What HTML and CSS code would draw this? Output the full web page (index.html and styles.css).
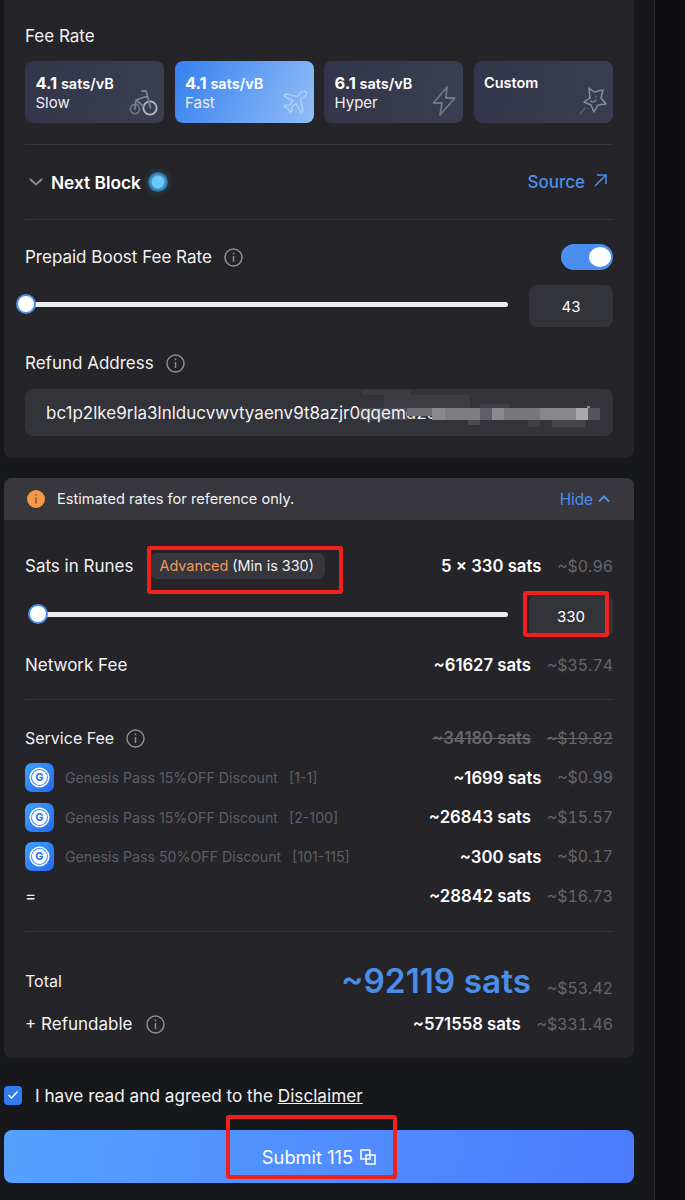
FILE: index.html
```html
<!DOCTYPE html>
<html lang="en">
<head>
    <meta charset="UTF-8">
    <meta name="viewport" content="width=device-width, initial-scale=1.0">
    <title>Inscribe Runes</title>
    <link rel="stylesheet" href="styles.css">
</head>
<body>
    <main class="column">
        <!-- Fee settings -->
        <section class="panel panel-top">
            <div class="label fee-title">Fee Rate</div>
            <div class="fee-cards">
                <div class="fee-card">
                    <div class="fee-text"><div class="fee-rate"><b>4.1</b> sats/vB</div><div class="fee-name">Slow</div></div>
                    <svg class="fee-icon" width="29" height="27" viewBox="0 0 29 27" fill="none" stroke-width="1.8" stroke-linecap="round" stroke-linejoin="round">
                        <circle cx="6" cy="20" r="4.6" stroke="#6f7280"/>
                        <circle cx="21" cy="19" r="6.6" stroke="#b5b7c0"/>
                        <path d="M13 2h4l1.500 5 3 12M18.500 7L7 11l-1 9M7 11l7 6" stroke="#7d808c"/>
                    </svg>
                </div>
                <div class="fee-card fee-card-active">
                    <div class="fee-text"><div class="fee-rate"><b>4.1</b> sats/vB</div><div class="fee-name">Fast</div></div>
                    <svg class="fee-icon" width="26" height="26" viewBox="0 0 26 26" fill="none" stroke="#d5e6fd" stroke-opacity="0.55" stroke-width="1.5" stroke-linejoin="round">
                        <path d="M24 2c-1.500-1.500-4-.5-5.500 1L15 6.500 4 4 2 6l9 5-4 4.500-3.500-.5L2 16.500l4 2 2.500 4 1.500-1.500-.5-3.500 4.500-4 5 9 2-2-2.500-11L22 7c1.500-1.500 3-3.500 2-5z"/>
                    </svg>
                </div>
                <div class="fee-card">
                    <div class="fee-text"><div class="fee-rate"><b>6.1</b> sats/vB</div><div class="fee-name">Hyper</div></div>
                    <svg class="fee-icon" width="25" height="30" viewBox="0 0 25 30" fill="none" stroke="#73767f" stroke-width="1.800" stroke-linejoin="round">
                        <path d="M15 1L1.500 17H10l-2 12 15-17h-9z"/>
                    </svg>
                </div>
                <div class="fee-card">
                    <div class="fee-text"><div class="fee-rate">Custom</div></div>
                    <svg class="fee-icon" width="29" height="30" viewBox="0 0 29 30" fill="none" stroke="#8a8c96" stroke-width="1.500" stroke-linejoin="round" stroke-linecap="round">
                        <path d="M11 2l5 4 9-2-2 8 5 6-8 1-4 7-3-7-7-3 6-4z"/>
                        <path d="M12 11v1M18 10v1M12.500 15c2 1.500 4 1 5.500-1" stroke-width="1.200"/>
                        <path d="M7 22l-5 6" stroke="#5d5f69"/>
                    </svg>
                </div>
            </div>
            <hr class="divider divider-fee">
            <div class="block-row">
                <svg class="chevron" width="14" height="8" viewBox="0 0 14 8" fill="none" stroke="#8b8c92" stroke-width="2"><path d="M1 1l6 5.500L13 1"/></svg>
                <span class="block-name">Next Block</span>
                <span class="pulse"></span>
                <span class="source">Source</span>
                <svg class="source-arrow" width="13" height="13" viewBox="0 0 13 13" fill="none" stroke="#4a8fe7" stroke-width="1.500"><path d="M1 12L12 1M3 1h9v9"/></svg>
            </div>
            <hr class="divider">
            <div class="boost-row">
                <span class="label">Prepaid Boost Fee Rate</span>
                <svg class="info" width="19" height="19" viewBox="0 0 19 19" fill="none" stroke="#8d8d92" stroke-width="1.500"><circle cx="9.500" cy="9.500" r="8.500"/><path d="M9.500 8v6M9.500 4.500v1.800"/></svg>
                <span class="toggle"><span class="toggle-knob"></span></span>
            </div>
            <div class="slider-row slider-boost">
                <div class="slider"><span class="thumb"></span></div>
                <div class="num-box">43</div>
            </div>
            <div class="refund-title">
                <span class="label">Refund Address</span>
                <svg class="info" width="19" height="19" viewBox="0 0 19 19" fill="none" stroke="#8d8d92" stroke-width="1.500"><circle cx="9.500" cy="9.500" r="8.500"/><path d="M9.500 8v6M9.500 4.500v1.800"/></svg>
            </div>
            <div class="address">
                bc1p2lke9rla3lnlducvwvtyaenv9t8azjr0qqemd2e
                <!-- pixelated patch hiding the end of the address -->
                <svg class="mosaic" width="245" height="47" viewBox="0 0 245 47">
                    <rect x="2" y="1" width="48" height="5" fill="#3b3b41"/>
                    <rect x="24" y="6" width="86" height="13" fill="#3c3c42"/>
                    <rect x="120" y="15" width="30" height="4" fill="#3f3f45"/>
                    <rect x="0" y="19" width="47" height="12" fill="#fff" fill-opacity="0.12"/>
                    <rect x="47" y="19" width="25" height="8" fill="#6b6b70"/>
                    <rect x="72" y="19" width="13" height="12" fill="#8a8a8e"/>
                    <rect x="85" y="19" width="35" height="12" fill="#7e7e83"/>
                    <rect x="120" y="19" width="12" height="12" fill="#5f5f65"/>
                    <rect x="132" y="19" width="12" height="12" fill="#8a8a8e"/>
                    <rect x="144" y="19" width="36" height="12" fill="#77777c"/>
                    <rect x="180" y="19" width="36" height="12" fill="#88888c"/>
                    <rect x="216" y="19" width="12" height="12" fill="#a9a9ac"/>
                    <rect x="228" y="19" width="12" height="12" fill="#55555b"/>
                    <rect x="108" y="31" width="12" height="5" fill="#4a4a50"/>
                    <rect x="168" y="31" width="12" height="7" fill="#3f3f45"/>
                    <rect x="192" y="31" width="33" height="7" fill="#46464c"/>
                    <rect x="227" y="17" width="3" height="2" fill="#8a8a8e"/>
                </svg>
            </div>
        </section>

        <!-- Fee breakdown -->
        <section class="panel panel-fees">
            <div class="notice">
                <svg class="notice-icon" width="18" height="18" viewBox="0 0 18 18"><circle cx="9" cy="9" r="9" fill="#f3974a"/><path d="M9 7.500v6M9 4v1.600" stroke="#8a4a16" stroke-width="1.300"/></svg>
                <span class="notice-text">Estimated rates for reference only.</span>
                <span class="hide">Hide</span>
                <svg width="12" height="8" viewBox="0 0 12 8" fill="none" stroke="#4a8fe7" stroke-width="2"><path d="M1 6.500l5-5 5 5"/></svg>
            </div>
            <div class="fees-body">
                <div class="row row-runes">
                    <span class="label">Sats in Runes</span>
                    <span class="badge"><span class="badge-accent">Advanced</span> (Min is 330)</span>
                    <span class="sats">5 × 330 sats</span>
                    <span class="usd">~$0.96</span>
                </div>
                <div class="slider-row slider-runes">
                    <div class="slider"><span class="thumb"></span></div>
                    <div class="num-box">330</div>
                </div>
                <div class="row row-network">
                    <span class="label">Network Fee</span>
                    <span class="sats">~61627 sats</span>
                    <span class="usd">~$35.74</span>
                </div>
                <hr class="divider divider-network">
                <div class="row row-service">
                    <span class="label label-small">Service Fee</span>
                    <svg class="info" width="19" height="19" viewBox="0 0 19 19" fill="none" stroke="#8d8d92" stroke-width="1.500"><circle cx="9.500" cy="9.500" r="8.500"/><path d="M9.500 8v6M9.500 4.500v1.800"/></svg>
                    <span class="sats sats-old">~34180 sats</span>
                    <span class="usd usd-old">~$19.82</span>
                </div>
                <div class="row row-pass">
                    <span class="pass-logo"><span class="pass-g">G</span></span>
                    <span class="pass-name">Genesis Pass 15%OFF Discount</span>
                    <span class="pass-range">[1-1]</span>
                    <span class="sats">~1699 sats</span>
                    <span class="usd">~$0.99</span>
                </div>
                <div class="row row-pass">
                    <span class="pass-logo"><span class="pass-g">G</span></span>
                    <span class="pass-name">Genesis Pass 15%OFF Discount</span>
                    <span class="pass-range">[2-100]</span>
                    <span class="sats">~26843 sats</span>
                    <span class="usd">~$15.57</span>
                </div>
                <div class="row row-pass">
                    <span class="pass-logo"><span class="pass-g">G</span></span>
                    <span class="pass-name">Genesis Pass 50%OFF Discount</span>
                    <span class="pass-range">[101-115]</span>
                    <span class="sats">~300 sats</span>
                    <span class="usd">~$0.17</span>
                </div>
                <div class="row row-equal">
                    <span class="label">=</span>
                    <span class="sats">~28842 sats</span>
                    <span class="usd">~$16.73</span>
                </div>
                <hr class="divider divider-equal">
                <div class="row row-total">
                    <span class="label label-small">Total</span>
                    <span class="total-sats">~92119 sats</span>
                    <span class="usd usd-total">~$53.42</span>
                </div>
                <div class="row row-refund">
                    <span class="label">+ Refundable</span>
                    <svg class="info" width="19" height="19" viewBox="0 0 19 19" fill="none" stroke="#8d8d92" stroke-width="1.500"><circle cx="9.500" cy="9.500" r="8.500"/><path d="M9.500 8v6M9.500 4.500v1.800"/></svg>
                    <span class="sats">~571558 sats</span>
                    <span class="usd">~$331.46</span>
                </div>
            </div>
        </section>

        <div class="agree">
            <span class="checkbox">
                <svg width="12" height="10" viewBox="0 0 12 10" fill="none" stroke="#fff" stroke-width="1.500"><path d="M1.500 5l3 3 6-6.500"/></svg>
            </span>
            <span class="agree-text">I have read and agreed to the <u>Disclaimer</u></span>
        </div>
        <button class="submit" type="button">
            Submit 115
            <svg width="16" height="16" viewBox="0 0 16 16" fill="none" stroke="#fff" stroke-width="1.500"><path d="M1 1h9v9H1zM6 6h9v9H6z"/></svg>
        </button>
    </main>
    <aside class="side-strip"></aside>

    <!-- Red annotation boxes drawn on the screenshot -->
    <div class="mark mark-badge"></div>
    <div class="mark mark-input"></div>
    <div class="mark mark-submit"></div>
</body>
</html>
```

FILE: styles.css
```css
* {
    box-sizing: border-box;
}
body {
    margin: 0;
    height: 1200px;
    overflow: hidden;
    position: relative;
    display: flex;
    background: #17181b;
    color: #fff;
    font-family: Inter, "Noto Sans", sans-serif;
    font-size: 16px;
}
.column {
    width: 630px;
    margin-left: 4px;
    flex: none;
}
.side-strip {
    width: 31px;
    height: 1200px;
    margin-left: 20px;
    background: #0d0d0f;
    border-left: 1px solid #2b2b2f;
}
.panel {
    background: #242429;
    border-radius: 8px;
}
.panel-top {
    height: 458px;
    padding: 25px 21px 0;
    border-radius: 0 0 8px 8px;
}
.panel-fees {
    height: 580px;
    margin-top: 20px;
    overflow: hidden;
}
.label {
    font-size: 17px;
    line-height: 22px;
    color: #f2f2f3;
    white-space: nowrap;
}
.label-small {
    font-size: 16px;
}
.divider {
    border: none;
    height: 1px;
    margin: 0;
    background: #36363b;
}

/* fee cards */
.fee-cards {
    display: flex;
    gap: 10.500px;
    margin-top: 14px;
}
.fee-card {
    width: 139px;
    height: 62px;
    padding: 12px 6px 7px 10.500px;
    display: flex;
    justify-content: space-between;
    border-radius: 8px;
    background: linear-gradient(100deg, #33364a, #3a3e50);
}
.fee-card-active {
    background: linear-gradient(115deg, #3580ee, #91bdf7);
}
.fee-rate {
    font-size: 14.500px;
    font-weight: 600;
    line-height: 20px;
    white-space: nowrap;
}
.fee-rate b {
    font-size: 16.500px;
    font-weight: 700;
}
.fee-name {
    font-size: 15px;
    line-height: 18px;
    color: #eeeef2;
}
.fee-icon {
    align-self: flex-end;
    flex: none;
}
.divider-fee {
    margin-top: 21px;
}

/* next block */
.block-row {
    height: 74px;
    display: flex;
    align-items: center;
    padding-left: 4px;
    padding-right: 6px;
}
.block-name {
    margin-left: 8px;
    font-weight: 600;
    font-size: 17.300px;
}
.pulse {
    width: 20px;
    height: 20px;
    margin-left: 7px;
    margin-top: -1px;
    border-radius: 50%;
    background: radial-gradient(circle closest-side, #6cc8fb 55%, #3f90c6 72%, #2c6a94 100%);
    box-shadow: 0 0 4px 3px #27353f;
}
.source {
    margin-left: auto;
    color: #4a8fe7;
    font-weight: 500;
    font-size: 17px;
}
.source-arrow {
    margin-left: 9px;
    margin-top: -3px;
}

/* boost + refund */
.boost-row {
    height: 26px;
    display: flex;
    align-items: center;
    margin-top: 24px;
}
.info {
    margin-left: 12px;
    flex: none;
}
.toggle {
    width: 52px;
    height: 26px;
    margin-left: auto;
    padding: 3px 2px;
    display: flex;
    justify-content: flex-end;
    border-radius: 13px;
    background: #4a8ff0;
}
.toggle-knob {
    width: 22px;
    height: 20px;
    border-radius: 50%;
    background: #fff;
}
.slider-row {
    display: flex;
    align-items: flex-start;
    justify-content: space-between;
}
.slider {
    position: relative;
    height: 5px;
    border-radius: 3px;
    background: #ecedf1;
}
.thumb {
    position: absolute;
    left: -10px;
    top: -8px;
    width: 20px;
    height: 20px;
    border-radius: 50%;
    background: #fff;
    border: 2px solid #4a8ff0;
}
.num-box {
    width: 84px;
    height: 42px;
    line-height: 44px;
    text-align: center;
    font-size: 15px;
    border-radius: 8px;
    background: #33333a;
}
.slider-boost {
    margin-top: 15px;
}
.slider-boost .slider {
    width: 482px;
    margin-top: 17px;
    margin-left: 1px;
}
.refund-title {
    display: flex;
    align-items: center;
    margin-top: 25px;
}
.address {
    position: relative;
    height: 47px;
    margin-top: 15px;
    padding-left: 21px;
    line-height: 49px;
    font-size: 17px;
    white-space: nowrap;
    overflow: hidden;
    border-radius: 8px;
    background: #33333a;
    color: #f0f0f2;
}
.mosaic {
    position: absolute;
    left: 335px;
    top: 0;
}

/* fee breakdown */
.notice {
    height: 42px;
    padding: 0 24px 0 23px;
    display: flex;
    align-items: center;
    background: #37373d;
}
.notice-text {
    margin-left: 12px;
    font-size: 14.600px;
    color: #f2f2f3;
}
.hide {
    margin-left: auto;
    margin-right: 5px;
    font-size: 15.300px;
    color: #4a8fe7;
}
.fees-body {
    padding: 0 21px;
}
.row {
    display: flex;
    align-items: center;
    justify-content: flex-end;
    gap: 16px;
}
.row > :first-child + .sats,
.row > .info + .sats,
.row > .pass-range + .sats,
.row > .badge + .sats {
    margin-left: auto;
}
.sats {
    font-size: 16.700px;
    font-weight: 600;
    white-space: nowrap;
}
.usd {
    font-size: 15.900px;
    font-variant-numeric: tabular-nums;
    color: #66666c;
    white-space: nowrap;
}
.row-runes {
    margin-top: 33px;
    height: 26px;
}
.badge {
    margin-left: 1px;
    width: 175px;
    height: 26px;
    line-height: 26px;
    padding-left: 9px;
    font-size: 14.400px;
    border-radius: 7px;
    background: #36363c;
    color: #f0f0f2;
    white-space: nowrap;
}
.badge-accent {
    color: #ef9a57;
}
.slider-runes {
    margin-top: 16px;
}
.slider-runes .slider {
    width: 470px;
    margin-top: 17px;
    margin-left: 13px;
}
.row-network {
    margin-top: 17px;
    height: 22px;
}
.divider-network {
    margin-top: 23px;
}
.row-service {
    margin-top: 27px;
    height: 22px;
}
.row-service .info {
    margin-left: -4px;
}
.sats-old,
.usd-old {
    color: #66666c;
    text-decoration: line-through;
}
.row-pass {
    height: 29px;
    margin-top: 10.500px;
}
.row-service + .row-pass {
    margin-top: 14px;
}
.pass-logo {
    width: 29px;
    height: 29px;
    flex: none;
    display: flex;
    align-items: center;
    justify-content: center;
    border-radius: 7px;
    background: linear-gradient(135deg, #3ea2fd, #2468ee);
}
.pass-g {
    width: 15px;
    height: 15px;
    line-height: 15px;
    text-align: center;
    font-size: 11px;
    font-weight: 700;
    color: #2b6fe0;
    border-radius: 50%;
    background: #fff;
    box-shadow: 0 0 0 1px #3c8bfa, 0 0 0 2.500px #fff;
}
.pass-name,
.pass-range {
    font-size: 14.200px;
    color: #5e5e64;
    white-space: nowrap;
}
.pass-name {
    margin-left: -5px;
}
.pass-range {
    margin-left: -5px;
}
.row-equal {
    margin-top: 14px;
    height: 22px;
}
.divider-equal {
    margin-top: 24px;
}
.row-total {
    margin-top: 28px;
    height: 42px;
}
.total-sats {
    margin-left: auto;
    font-size: 33.400px;
    font-weight: 600;
    color: #4a8fe7;
    white-space: nowrap;
}
.usd-total {
    margin-top: 14px;
}
.row-refund {
    margin-top: 11px;
    height: 22px;
}
.row-refund .info {
    margin-left: -2px;
}

/* agree + submit */
.agree {
    display: flex;
    align-items: center;
    margin-top: 27px;
    height: 20px;
}
.checkbox {
    width: 18px;
    height: 19px;
    display: flex;
    align-items: center;
    justify-content: center;
    border-radius: 4px;
    background: #2f7bef;
}
.agree-text {
    margin-left: 13px;
    font-size: 17.200px;
    color: #f2f2f3;
}
.submit {
    width: 630px;
    height: 53px;
    margin-top: 25px;
    display: flex;
    align-items: center;
    justify-content: center;
    gap: 7px;
    border: none;
    border-radius: 8px;
    background: linear-gradient(100deg, #55a1ff, #4c7bff);
    color: #fff;
    font-family: inherit;
    font-size: 18.300px;
}

/* annotation overlays */
.mark {
    position: absolute;
    border: 4px solid #f0201a;
    border-radius: 3px;
}
.mark-badge {
    left: 147px;
    top: 546px;
    width: 196px;
    height: 48px;
}
.mark-input {
    left: 523px;
    top: 591px;
    width: 86px;
    height: 46px;
}
.mark-submit {
    left: 226px;
    top: 1115px;
    width: 171px;
    height: 64px;
}
```
